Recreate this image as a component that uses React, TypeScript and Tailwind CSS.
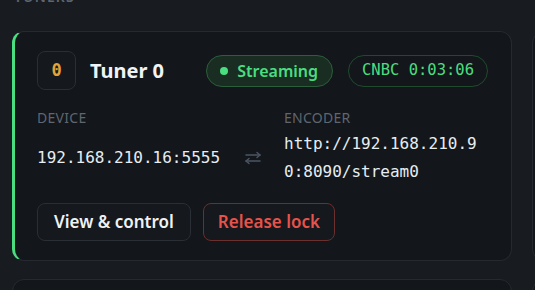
import React from "react";

const sans = { fontFamily: '"Noto Sans", "Open Sans", sans-serif' };
const mono = { fontFamily: '"DejaVu Sans Mono", "Liberation Mono", monospace' };

function SwapIcon() {
  return (
    <svg width="18" height="14" viewBox="0 0 18 14" fill="none" stroke="#4b5563" strokeWidth="1.5" strokeLinecap="round" strokeLinejoin="round">
      <path d="M2 4H16" />
      <path d="M13 1.5L16 4L13 6.5" />
      <path d="M16 10H2" />
      <path d="M5 7.5L2 10L5 12.5" />
    </svg>
  );
}

function TunerCard() {
  return (
    <div className="rounded-xl border border-[#262a30] border-l-[3px] border-l-[#4ade80] bg-[#13161a] pl-[22px] pr-[23px] pt-[19px] pb-[19px]">
      <div className="flex items-center justify-between">
        <div className="flex items-center gap-[14px]">
          <div className="flex h-[39px] w-[39px] items-center justify-center rounded-lg border border-[#2a2e35] bg-[#15181c]">
            <span className="text-[17px] font-bold text-[#e5a23c]" style={mono}>0</span>
          </div>
          <span className="text-[20px] font-bold text-[#f0f3f6]" style={sans}>Tuner 0</span>
        </div>
        <div className="flex items-center gap-[15px]">
          <div className="flex h-[32px] items-center gap-[9px] rounded-full border border-[#2b5e3a] bg-[#1a2d22] pl-[13px] pr-[14px]">
            <span className="h-[8px] w-[8px] rounded-full bg-[#4ade80]" />
            <span className="text-[16px] font-semibold text-[#4ade80]" style={sans}>Streaming</span>
          </div>
          <div className="flex h-[32px] items-center rounded-full border border-[#1f4b2c] px-[13px]">
            <span className="text-[15.5px] text-[#4ade80]" style={mono}>CNBC 0:03:06</span>
          </div>
        </div>
      </div>

      <div className="mt-[18px] grid grid-cols-[207px_40px_1fr] items-center">
        <div className="text-[14px] uppercase leading-5 tracking-[0.02em] text-[#5f6670]" style={sans}>Device</div>
        <div />
        <div className="text-[14px] uppercase leading-5 tracking-[0.02em] text-[#5f6670]" style={sans}>Encoder</div>
        <div className="mt-[2px] text-[16px] leading-7 text-[#e6edf3]" style={mono}>192.168.210.16:5555</div>
        <div className="mt-[2px] flex items-center"><SwapIcon /></div>
        <div className="mt-[2px] break-all text-[16px] leading-7 text-[#e6edf3]" style={mono}>http://192.168.210.90:8090/stream0</div>
      </div>

      <div className="mt-[17px] flex gap-3">
        <button className="h-[38px] rounded-lg border border-[#2a2e35] bg-[#15181c] px-4 text-[17px] font-semibold text-[#eef2f6]" style={sans}>View &amp; control</button>
        <button className="h-[38px] rounded-lg border border-[#6b2f2d] bg-[#15181c] px-[14px] text-[17px] font-semibold text-[#e5534b]" style={sans}>Release lock</button>
      </div>
    </div>
  );
}

export default function App() {
  return (
    <div className="h-[290px] w-[535px] overflow-hidden bg-[#181b20]">
      <div className="pl-[14px]">
        <div className="mt-[-13px] text-[14px] font-semibold uppercase leading-5 tracking-[0.08em] text-[#5f6670]" style={sans}>Tuners</div>
      </div>
      <div className="mt-[24px] grid w-[1044px] grid-cols-[500px_500px] gap-x-5 gap-y-[18px] pl-3">
        <TunerCard />
        <div className="h-[230px] rounded-xl border border-[#262a30] bg-[#13161a]" />
        <div className="h-[200px] rounded-xl border border-[#262a30] bg-[#13161a]" />
        <div className="h-[200px] rounded-xl border border-[#262a30] bg-[#13161a]" />
      </div>
    </div>
  );
}
